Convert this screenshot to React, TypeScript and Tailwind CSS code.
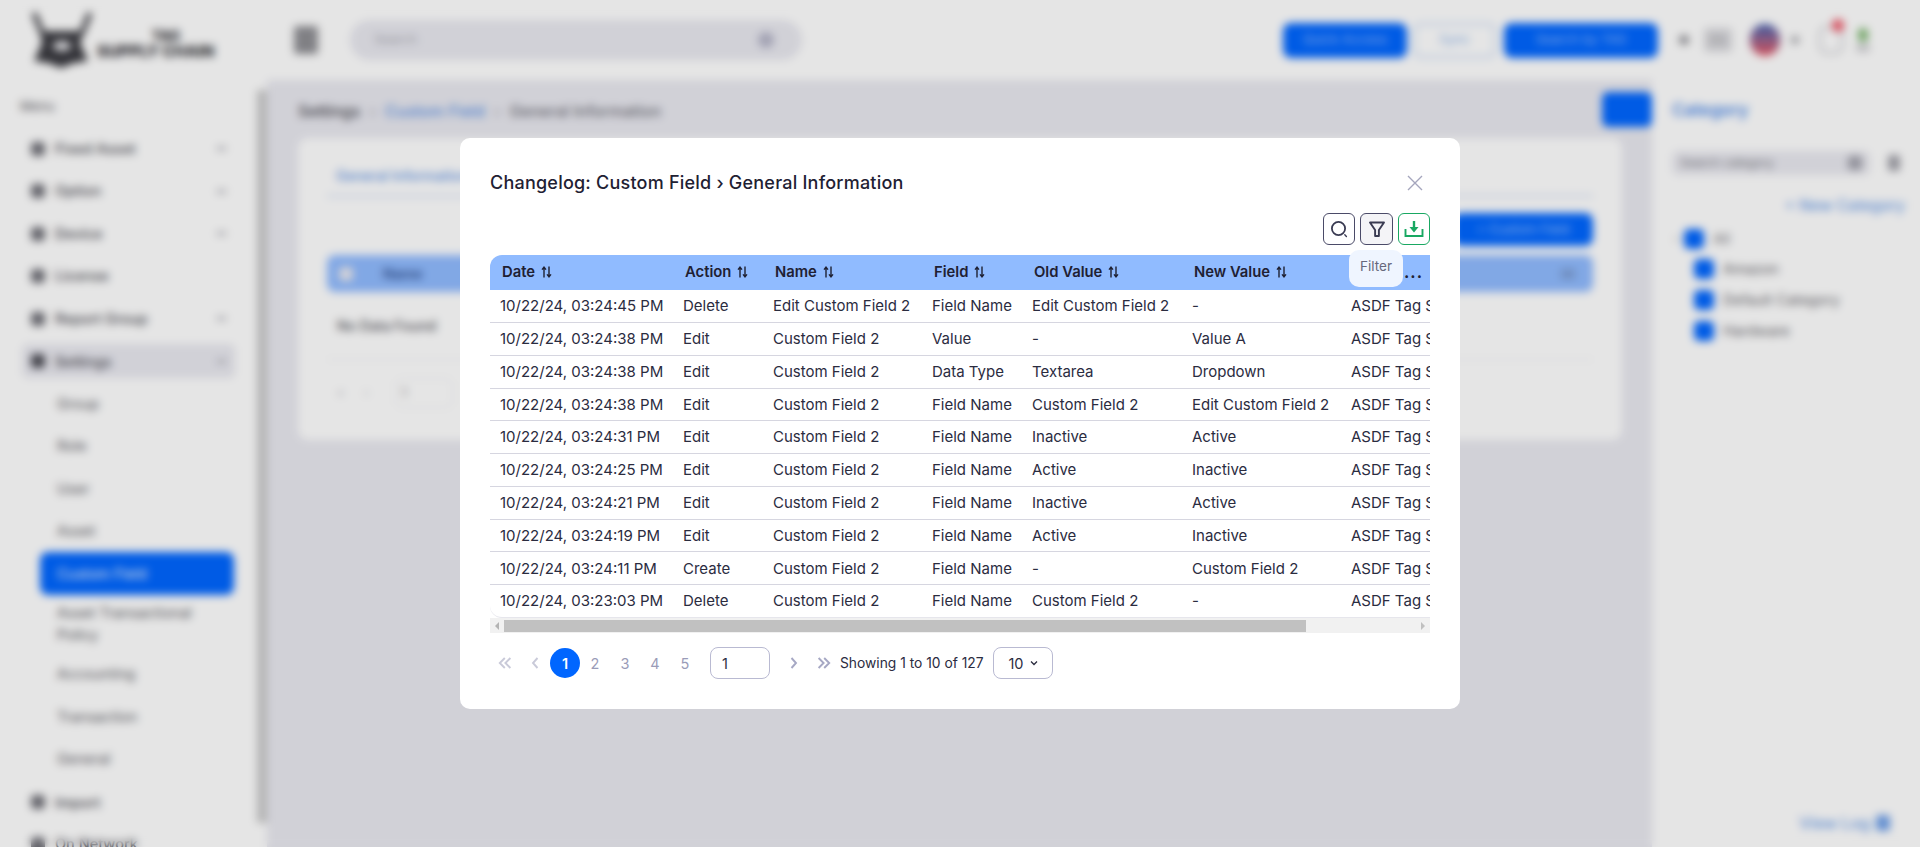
import React from "react";

const font = { fontFamily: "Inter, 'Liberation Sans', sans-serif" };

function Sort() {
  return (
    <svg width="11" height="12" viewBox="0 0 11 12" fill="none" stroke="#1f2133" strokeWidth="1.4" className="ml-[6px] inline-block">
      <path d="M3 11.5V1.5M1 3.6l2-2.4 2 2.4" />
      <path d="M8 .5v10M6 8.4l2 2.4 2-2.4" />
    </svg>
  );
}

const rows = [
  ["10/22/24, 03:24:45 PM", "Delete", "Edit Custom Field 2", "Field Name", "Edit Custom Field 2", "-"],
  ["10/22/24, 03:24:38 PM", "Edit", "Custom Field 2", "Value", "-", "Value A"],
  ["10/22/24, 03:24:38 PM", "Edit", "Custom Field 2", "Data Type", "Textarea", "Dropdown"],
  ["10/22/24, 03:24:38 PM", "Edit", "Custom Field 2", "Field Name", "Custom Field 2", "Edit Custom Field 2"],
  ["10/22/24, 03:24:31 PM", "Edit", "Custom Field 2", "Field Name", "Inactive", "Active"],
  ["10/22/24, 03:24:25 PM", "Edit", "Custom Field 2", "Field Name", "Active", "Inactive"],
  ["10/22/24, 03:24:21 PM", "Edit", "Custom Field 2", "Field Name", "Inactive", "Active"],
  ["10/22/24, 03:24:19 PM", "Edit", "Custom Field 2", "Field Name", "Active", "Inactive"],
  ["10/22/24, 03:24:11 PM", "Create", "Custom Field 2", "Field Name", "-", "Custom Field 2"],
  ["10/22/24, 03:23:03 PM", "Delete", "Custom Field 2", "Field Name", "Custom Field 2", "-"],
];

const headers = ["Date", "Action", "Name", "Field", "Old Value", "New Value"];
const widths = ["w-[183px]", "w-[90px]", "w-[159px]", "w-[100px]", "w-[160px]", "w-[159px]"];

function ChangeTable() {
  return (
    <div className="mt-[10px] w-[940px] overflow-hidden">
      <div className="flex h-[35.6px] w-[1100px] items-center rounded-t-[12px] bg-[#90bbff] pl-[10px] text-[14.8px] font-semibold text-[#1f2133]">
        {headers.map((h, i) => (
          <div key={h} className={`${widths[i]} flex items-center pl-[2px]`}>
            {h}
            <Sort />
          </div>
        ))}
        <div className="pl-[53px] text-[16px] font-bold tracking-[1px]">...</div>
      </div>
      {rows.map((r, i) => (
        <div
          key={i}
          className={`flex h-[32.8px] w-[1100px] items-center pl-[10px] pt-[1px] text-[15px] text-[#2b2c3f] ${i < 9 ? "border-b border-[#d6d6e0]" : "border-b border-[#e6e6ec] rounded-b-[12px]"}`}
        >
          {r.map((c, j) => (
            <div key={j} className={`${widths[j]} whitespace-nowrap`}>
              {c}
            </div>
          ))}
          <div className="whitespace-nowrap">ASDF Tag Supplier</div>
        </div>
      ))}
      <div className="mt-[0.4px] flex h-[15px] items-center bg-[#f1f1f1]">
        <div className="flex w-[14px] shrink-0 justify-center">
          <div className="h-0 w-0 border-y-[4px] border-r-[4px] border-y-transparent border-r-[#b4b4b4]" />
        </div>
        <div className="h-[12px] w-[802px] bg-[#c1c1c1]" />
        <div className="flex-1" />
        <div className="flex w-[14px] shrink-0 justify-center">
          <div className="h-0 w-0 border-y-[4px] border-l-[4px] border-y-transparent border-l-[#c0c0c0]" />
        </div>
      </div>
    </div>
  );
}

function Toolbar() {
  return (
    <div className="relative mt-[15px] flex justify-end gap-[5px]">
      <button className="flex h-[32px] w-[32px] items-center justify-center rounded-[6px] border border-[#4b4b68] bg-white">
        <svg width="20" height="20" viewBox="0 0 20 20" fill="none" stroke="#3a3b52" strokeWidth="1.8">
          <circle cx="9.5" cy="9.5" r="6.6" />
          <path d="M15.8 15.8l1.6 1.6" strokeLinecap="round" strokeWidth="1.4" />
        </svg>
      </button>
      <button className="flex h-[32px] w-[33px] items-center justify-center rounded-[6px] border border-[#4b4b68] bg-[#f4f4f7]">
        <svg width="18" height="18" viewBox="0 0 18 18" fill="none" stroke="#3a3b52" strokeWidth="1.9" strokeLinejoin="round">
          <path d="M2 2.5h14L10.9 10v6H7.1v-6z" />
        </svg>
      </button>
      <button className="flex h-[32px] w-[32px] items-center justify-center rounded-[6px] border border-[#19a862] bg-white">
        <svg width="20" height="20" viewBox="0 0 20 20" fill="none">
          <path d="M1.5 10v7h17v-7" stroke="#19a862" strokeWidth="1.9" />
          <path d="M10 2v7" stroke="#19a862" strokeWidth="2.4" />
          <path d="M5.5 8h9L10 13.5z" fill="#19a862" />
        </svg>
      </button>
      <div className="absolute right-[27px] top-[37px] z-10 flex h-[37px] w-[54px] items-center justify-center rounded-[10px] bg-[#eff5ff] pb-[3px] text-[13.5px] text-[#67687c]">
        Filter
      </div>
    </div>
  );
}

function Chev({ d, c = "#a6a8c4" }: { d: string; c?: string }) {
  return (
    <svg width="16" height="16" viewBox="0 0 16 16" fill="none" stroke={c} strokeWidth="1.9">
      <path d={d} />
    </svg>
  );
}

function Pager() {
  return (
    <div className="mt-[14px] flex h-[32px] items-center text-[14.5px]">
      <div className="flex w-[30px] justify-center">
        <Chev c="#c9cad9" d="M7.8 3L2.8 8l5 5M13.4 3L8.4 8l5 5" />
      </div>
      <div className="flex w-[30px] justify-center">
        <Chev c="#c9cad9" d="M10.5 3L6 8l4.5 5" />
      </div>
      <div className="flex h-[30px] w-[30px] items-center justify-center rounded-full bg-[#0066ff] font-semibold text-white">1</div>
      {["2", "3", "4", "5"].map((n) => (
        <div key={n} className="flex h-[30px] w-[30px] items-center justify-center text-[#9a9cb8]">
          {n}
        </div>
      ))}
      <div className="ml-[10px] flex h-[32px] w-[60px] items-center rounded-[8px] border border-[#b9bad2] pl-[11px] text-[#2b2c3f]">1</div>
      <div className="ml-[9px] flex w-[30px] justify-center">
        <Chev d="M5.5 3L10 8l-4.5 5" />
      </div>
      <div className="flex w-[30px] justify-center">
        <Chev d="M2.6 3L7.6 8l-5 5M8.2 3l5 5-5 5" />
      </div>
      <div className="ml-[1px] text-[13.8px] whitespace-nowrap text-[#2b2c3f]">Showing 1 to 10 of 127</div>
      <div className="ml-[10px] flex h-[32px] w-[60px] items-center justify-center gap-[5px] rounded-[8px] border border-[#b9bad2] text-[#2b2c3f]">
        10
        <svg width="10" height="10" viewBox="0 0 10 10" fill="none" stroke="#2b2c3f" strokeWidth="1.3">
          <path d="M2 3.5L5 6.5l3-3" />
        </svg>
      </div>
    </div>
  );
}

function Modal() {
  return (
    <div className="w-[1000px] rounded-[10px] bg-white px-[30px] pt-[30px] pb-[30px]">
      <div className="flex h-[30px] items-center justify-between">
        <div className="text-[18px] font-medium tracking-[0.22px] whitespace-nowrap text-[#1f2133]">Changelog: Custom Field › General Information</div>
        <svg width="16" height="16" viewBox="0 0 16 16" fill="none" stroke="#a5a6bd" strokeWidth="1.4" className="mr-[7px]">
          <path d="M1 1l14 14M15 1L1 15" />
        </svg>
      </div>
      <Toolbar />
      <ChangeTable />
      <Pager />
    </div>
  );
}

function Square({ c = "#6e6e76" }: { c?: string }) {
  return <div className="h-[14px] w-[14px] shrink-0 rounded-[4px]" style={{ background: c }} />;
}

function SideItem({ label, chev, active }: { label: string; chev?: boolean; active?: boolean }) {
  return (
    <div className={`mx-[22px] flex h-[34px] items-center rounded-[6px] pl-[9px] pr-[9px] ${active ? "bg-[#e9e9f0]" : ""}`}>
      <Square c={active ? "#4a4a52" : "#6e6e76"} />
      <div className="ml-[10px] flex-1 text-[14.5px] font-medium whitespace-nowrap text-[#4a4a52]">{label}</div>
      {chev && <div className="h-[3px] w-[9px] bg-[#a5a5ad]" />}
    </div>
  );
}

function SubItem({ label, active, tall }: { label: string; active?: boolean; tall?: boolean }) {
  return (
    <div
      className={`ml-[40px] mr-[23px] flex items-center rounded-[8px] pl-[17px] pr-[8px] text-[14.5px] leading-[22px] ${tall ? "h-[58px]" : "h-[42.5px]"} ${active ? "bg-[#0066ff] text-white" : "text-[#5a5a62]"}`}
    >
      {label}
    </div>
  );
}

function Sidebar() {
  return (
    <div className="flex w-[257px] shrink-0 flex-col">
      <div className="pl-[20px] pt-[17px] text-[13px] text-[#5a5a62]">Menu</div>
      <div className="mt-[15px] flex flex-col gap-[8.6px]">
        <SideItem label="Fixed Asset" chev />
        <SideItem label="Option" chev />
        <SideItem label="Device" chev />
        <SideItem label="License" />
        <SideItem label="Report Group" chev />
        <SideItem label="Settings" chev active />
      </div>
      <div className="mt-[4px] flex flex-col">
        <SubItem label="Group" />
        <SubItem label="Role" />
        <SubItem label="User" />
        <SubItem label="Asset" />
        <SubItem label="Custom Field" active />
        <SubItem label="Asset Transactional Policy" tall />
        <SubItem label="Accounting" />
        <SubItem label="Transaction" />
        <SubItem label="General" />
      </div>
      <div className="mt-[5px] flex flex-col gap-[7.6px]">
        <SideItem label="Import" />
        <SideItem label="On Network" />
      </div>
    </div>
  );
}

function Logo() {
  return (
    <svg width="64" height="58" viewBox="0 0 64 58" fill="none">
      <path d="M4 2l9 22M60 2l-9 22" stroke="#3a3a40" strokeWidth="5" />
      <path d="M10 20h44l-4 12 8 18-14 2-13 5-13-5-14-2 8-18z" fill="#3a3a40" />
      <ellipse cx="32" cy="35" rx="9" ry="5" fill="#e8e8ec" />
    </svg>
  );
}

function TopBar() {
  return (
    <div className="flex h-[80px] shrink-0 items-center">
      <div className="flex w-[294px] shrink-0 items-center pl-[30px]">
        <Logo />
        <div className="ml-[3px] mt-[8px] flex flex-col items-end font-extrabold leading-[16px] text-[#2f2f35]">
          <span className="mr-[34px] text-[14px]">TAG</span>
          <span className="text-[15.8px] whitespace-nowrap">SUPPLY CHAIN</span>
        </div>
      </div>
      <div className="flex h-[28px] w-[24px] shrink-0 flex-col justify-between rounded-[3px] bg-[#8f8f94] p-[3px]" />
      <div className="ml-[32px] flex h-[40px] w-[452px] shrink-0 items-center justify-between rounded-full bg-[#e9e9f0] pl-[24px] pr-[28px] text-[13px] text-[#a8a8b0]">
        <span>Search</span>
        <div className="h-[16px] w-[16px] rounded-full bg-[#b5b5c8]" />
      </div>
      <div className="ml-[481px] flex h-[35px] w-[124px] shrink-0 items-center justify-center rounded-[8px] bg-[#0066ff] text-[13px] text-[#8db8ff]">Quick Access</div>
      <div className="ml-[6px] flex h-[35px] w-[83px] shrink-0 items-center justify-center rounded-[8px] border-2 border-[#c4d9f5] text-[13px] text-[#8fb6ec]">Sync</div>
      <div className="ml-[8px] flex h-[35px] w-[154px] shrink-0 items-center justify-center rounded-[8px] bg-[#0066ff] text-[13px] text-[#8db8ff]">Search by TAG</div>
      <div className="ml-[21px] h-[10px] w-[10px] shrink-0 rounded-full bg-[#8f8f94]" />
      <div className="ml-[15px] flex h-[24px] w-[28px] shrink-0 items-center justify-center rounded-[4px] bg-[#dadade] text-[11px] text-[#9a9a9e]">EN</div>
      <div className="ml-[18px] h-[32px] w-[30px] shrink-0 rounded-full bg-gradient-to-b from-[#3b5fb0] to-[#e8505f]" />
      <div className="ml-[11px] h-[8px] w-[8px] shrink-0 rounded-full bg-[#a5a5aa]" />
      <div className="relative ml-[20px] h-[28px] w-[24px] shrink-0 rounded-[8px] border-2 border-[#c4c4ca]">
        <div className="absolute right-[-3px] top-[-9px] h-[13px] w-[12px] rounded-full bg-[#ef5a6a]" />
      </div>
      <div className="ml-[13px] flex flex-col items-center">
        <div className="h-[14px] w-[10px] rounded-[5px] bg-[#7cb66f]" />
        <div className="mt-[2px] h-[8px] w-[14px] rounded-[4px] bg-[#cfcfd3]" />
      </div>
    </div>
  );
}

function MainArea() {
  return (
    <div className="flex min-w-0 flex-1 flex-col bg-[#e9e9f0] pl-[31px] pr-[30px]">
      <div className="flex h-[58px] shrink-0 items-center justify-between">
        <div className="flex items-center gap-[9px] pt-[4px] text-[16px] font-medium whitespace-nowrap">
          <span className="text-[#45454d]">Settings</span>
          <span className="text-[#a0a0a8]">›</span>
          <span className="text-[#5f92e2]">Custom Field</span>
          <span className="text-[#a0a0a8]">›</span>
          <span className="text-[#6e6e78]">General Information</span>
        </div>
        <div className="-mr-[30px] h-[35px] w-[50px] rounded-[6px] bg-[#0066ff]" />
      </div>
      <div className="h-[302px] rounded-[10px] bg-white px-[29px] pt-[30px]">
        <div className="border-b-2 border-[#cfdcf2] pb-[11px]">
          <div className="pl-[9px] text-[14px] leading-[16px] font-medium text-[#5f92e2]">General Information</div>
        </div>
        <div className="mt-[16px] flex justify-end">
          <div className="flex h-[33px] w-[140px] items-center justify-center rounded-[8px] bg-[#0066ff] text-[13px] text-[#9cc2ff]">+ Custom Field</div>
        </div>
        <div className="mt-[9px] flex h-[37px] items-center justify-between rounded-[8px] bg-[#90bbff] px-[12px]">
          <div className="flex items-center gap-[30px] text-[14px] font-semibold text-[#2f4f8f]">
            <div className="h-[14px] w-[14px] rounded-[4px] bg-[#e9e9f0]" />
            Name
          </div>
          <div className="mr-[6px] h-[10px] w-[14px] bg-[#7d9fd6]" />
        </div>
        <div className="h-[68px] border-b border-[#ececf0] pl-[10px] pt-[23px] text-[14px] font-medium text-[#55555c]">No Data Found</div>
        <div className="mt-[18px] flex items-center gap-[20px] pl-[10px] text-[12px] text-[#c0c0c8]">
          <span>«</span>
          <span>‹</span>
          <div className="ml-[6px] h-[30px] w-[58px] rounded-[8px] border border-[#ececf0] pl-[6px] leading-[28px] text-[#77777c]">1</div>
        </div>
      </div>
    </div>
  );
}

function TreeRow({ label, root }: { label: string; root?: boolean }) {
  return (
    <div className={`flex h-[30.7px] items-center ${root ? "pl-[2px]" : "pl-[22px]"}`}>
      {root && <span className="w-[10px] text-[13px] leading-none text-[#a0a0a8]">‹</span>}
      <div className="h-[20px] w-[20px] rounded-[5px] bg-[#0066ff]" />
      <div className={`ml-[9px] text-[14.5px] whitespace-nowrap ${root ? "text-[#7a7a80]" : "text-[#66666c]"}`}>{label}</div>
    </div>
  );
}

function RightPanel() {
  return (
    <div className="flex w-[268px] shrink-0 flex-col pl-[20px] pr-[15px]">
      <div className="flex h-[58px] items-center pt-[4px] text-[17px] font-semibold text-[#4d8ae8]">Category</div>
      <div className="mt-[13px] flex items-center gap-[18px]">
        <div className="flex h-[24px] w-[198px] items-center justify-between rounded-[6px] bg-[#e9e9f0] pl-[8px] pr-[8px] text-[12px] text-[#77777e]">
          Search category
          <div className="h-[14px] w-[14px] rounded-[3px] bg-[#a3a3ad]" />
        </div>
        <div className="h-[16px] w-[12px] rounded-[3px] bg-[#a0a0a8]" />
      </div>
      <div className="mt-[19px] text-right text-[15.5px] font-medium whitespace-nowrap text-[#6fa0ea]">+ New Category</div>
      <div className="mt-[6px] flex flex-col">
        <TreeRow label="All" root />
        <TreeRow label="Amazon" />
        <TreeRow label="Default Category" />
        <TreeRow label="Hardware" />
      </div>
      <div className="mt-auto mb-[12px] mr-[15px] flex items-center justify-end gap-[6px] text-[16px] font-medium whitespace-nowrap text-[#6fa0ea]">
        View Log
        <div className="h-[16px] w-[14px] rounded-[3px] bg-[#6fa0ea]" />
      </div>
    </div>
  );
}

export default function App() {
  return (
    <div className="relative h-[847px] w-[1920px] overflow-hidden bg-white" style={font}>
      <div className="flex h-full flex-col">
        <TopBar />
        <div className="flex min-h-0 flex-1">
          <Sidebar />
          <div className="mt-[10px] mb-[24px] w-[10px] shrink-0 bg-[#c9c9c9]" />
          <MainArea />
          <RightPanel />
        </div>
      </div>
      <div className="absolute inset-0 flex items-center justify-center bg-black/10 backdrop-blur-[4px]">
        <Modal />
      </div>
    </div>
  );
}
